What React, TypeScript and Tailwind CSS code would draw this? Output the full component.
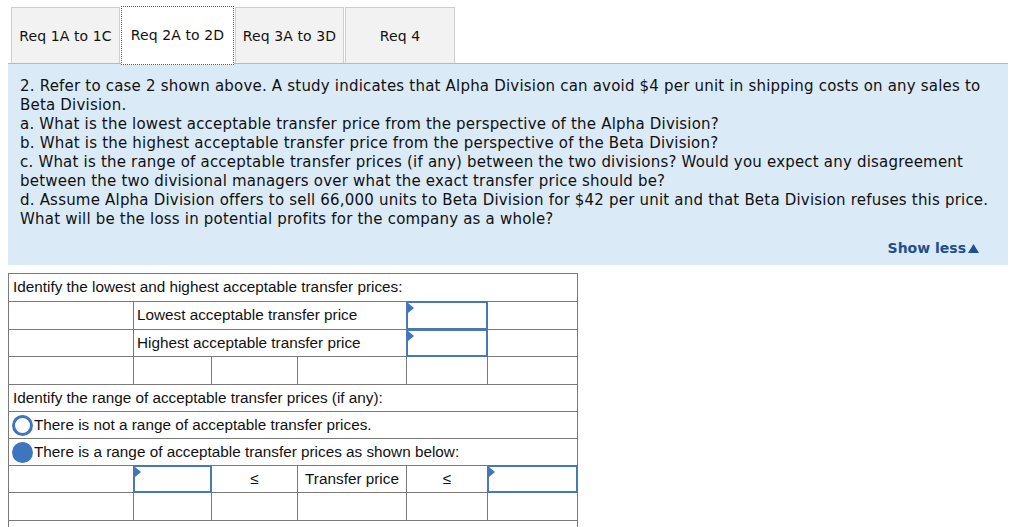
import React from "react";

const panelLines = [
  "2. Refer to case 2 shown above. A study indicates that Alpha Division can avoid $4 per unit in shipping costs on any sales to",
  "Beta Division.",
  "a. What is the lowest acceptable transfer price from the perspective of the Alpha Division?",
  "b. What is the highest acceptable transfer price from the perspective of the Beta Division?",
  "c. What is the range of acceptable transfer prices (if any) between the two divisions? Would you expect any disagreement",
  "between the two divisional managers over what the exact transfer price should be?",
  "d. Assume Alpha Division offers to sell 66,000 units to Beta Division for $42 per unit and that Beta Division refuses this price.",
  "What will be the loss in potential profits for the company as a whole?",
];

const colW = ["w-[125px]", "w-[78px]", "w-[86px]", "w-[109px]", "w-[81px]", "w-[90px]"];

function Cell({ i, children, input, className = "" }: { i: number; children?: React.ReactNode; input?: boolean; className?: string }) {
  return (
    <div className={`${colW[i]} shrink-0 border-r border-[#7a7a7a] h-full relative flex items-center ${className}`}>
      {input && (
        <div className="absolute inset-[-1px] border-2 border-[#4a78b4] bg-white">
          <div className="absolute left-0 top-0 w-0 h-0 border-t-[5px] border-b-[5px] border-l-[6px] border-t-transparent border-b-transparent border-l-[#3f74c0]" />
        </div>
      )}
      {children}
    </div>
  );
}

function Row({ h, children }: { h: string; children: React.ReactNode }) {
  return <div className={`flex ${h} border-b border-[#7a7a7a]`}>{children}</div>;
}

export default function App() {
  return (
    <div className="w-[1024px] h-[527px] overflow-hidden bg-white" style={{ fontFamily: "'DejaVu Sans', Verdana, sans-serif" }}>
      <div className="pt-[7px] px-[8px] w-[1016px]">
        {/* tabs */}
        <div className="flex items-end gap-[1px] pl-[3px] h-[57px] border-b border-[#b9b9b9] relative">
          <div className="w-[109px] h-[56px] bg-[#f2f2f2] border border-[#cfcfcf] border-b-0 flex items-center justify-center pt-[1px] text-[14px] tracking-[0.1px] text-[#111]">Req 1A to 1C</div>
          <div className="w-[113px] h-[59px] bg-white border border-dotted border-[#2f63b0] flex items-center justify-center text-[14px] tracking-[0.1px] text-[#111] relative top-[2px] z-10">Req 2A to 2D</div>
          <div className="w-[109px] h-[56px] bg-[#f2f2f2] border border-[#cfcfcf] border-b-0 flex items-center justify-center pt-[1px] text-[14px] tracking-[0.1px] text-[#111]">Req 3A to 3D</div>
          <div className="w-[110px] h-[56px] bg-[#f2f2f2] border border-[#cfcfcf] border-b-0 flex items-center justify-center pt-[1px] text-[14px] tracking-[0.1px] text-[#111]">Req 4</div>
        </div>
        {/* panel */}
        <div className="bg-[#dbeaf7] h-[201px] pt-[13px] pl-[12px] pr-[20px] relative">
          {panelLines.map((l, i) => (
            <div key={i} className="text-[15px] tracking-[0.2px] leading-[19px] text-[#111] whitespace-nowrap">{l}</div>
          ))}
          <div className="flex justify-end mt-[9px] pr-[9px]">
            <span className="text-[14px] font-bold text-[#1f4f8f] flex items-center gap-[2px]">
              Show less
              <svg width="11" height="9" viewBox="0 0 11 9"><path d="M5.5 0 L11 9 L0 9 Z" fill="#1f4f8f" /></svg>
            </span>
          </div>
        </div>
      </div>
      {/* table */}
      <div className="ml-[8px] mt-[8px] w-[570px] border-l border-t border-[#7a7a7a] text-[15.3px] text-[#111]" style={{ fontFamily: "'Liberation Sans', Arial, sans-serif" }}>
        <Row h="h-[28px]">
          <div className="flex-1 border-r border-[#7a7a7a] h-full flex items-center pl-[4px]">Identify the lowest and highest acceptable transfer prices:</div>
        </Row>
        <Row h="h-[28px]">
          <Cell i={0} />
          <div className="w-[273px] shrink-0 border-r border-[#7a7a7a] h-full flex items-center pl-[3px]">Lowest acceptable transfer price</div>
          <Cell i={4} input />
          <Cell i={5} />
        </Row>
        <Row h="h-[27px]">
          <Cell i={0} />
          <div className="w-[273px] shrink-0 border-r border-[#7a7a7a] h-full flex items-center pl-[3px]">Highest acceptable transfer price</div>
          <Cell i={4} input />
          <Cell i={5} />
        </Row>
        <Row h="h-[28px]">
          <Cell i={0} />
          <Cell i={1} />
          <Cell i={2} />
          <Cell i={3} />
          <Cell i={4} />
          <Cell i={5} />
        </Row>
        <Row h="h-[27px]">
          <div className="flex-1 border-r border-[#7a7a7a] h-full flex items-center pl-[4px]">Identify the range of acceptable transfer prices (if any):</div>
        </Row>
        <Row h="h-[27px]">
          <div className="flex-1 border-r border-[#7a7a7a] h-full flex items-center pl-[3px] gap-[1px]">
            <span className="w-[21px] h-[21px] rounded-full border-[3px] border-[#3d76bd] bg-white shrink-0" />
            There is not a range of acceptable transfer prices.
          </div>
        </Row>
        <Row h="h-[27px]">
          <div className="flex-1 border-r border-[#7a7a7a] h-full flex items-center pl-[3px] gap-[1px]">
            <span className="w-[21px] h-[21px] rounded-full bg-[#3d76bd] shrink-0" />
            There is a range of acceptable transfer prices as shown below:
          </div>
        </Row>
        <Row h="h-[27px]">
          <Cell i={0} />
          <Cell i={1} input />
          <Cell i={2} className="justify-center">≤</Cell>
          <Cell i={3} className="justify-center">Transfer price</Cell>
          <Cell i={4} className="justify-center">≤</Cell>
          <Cell i={5} input />
        </Row>
        <Row h="h-[28px]">
          <Cell i={0} />
          <Cell i={1} />
          <Cell i={2} />
          <Cell i={3} />
          <Cell i={4} />
          <Cell i={5} />
        </Row>
        <Row h="h-[28px]">
          <div className="flex-1 border-r border-[#7a7a7a] h-full flex items-start pt-[2px] pl-[4px]">Will the managers come to an agreement on the transfer price?</div>
        </Row>
      </div>
    </div>
  );
}
